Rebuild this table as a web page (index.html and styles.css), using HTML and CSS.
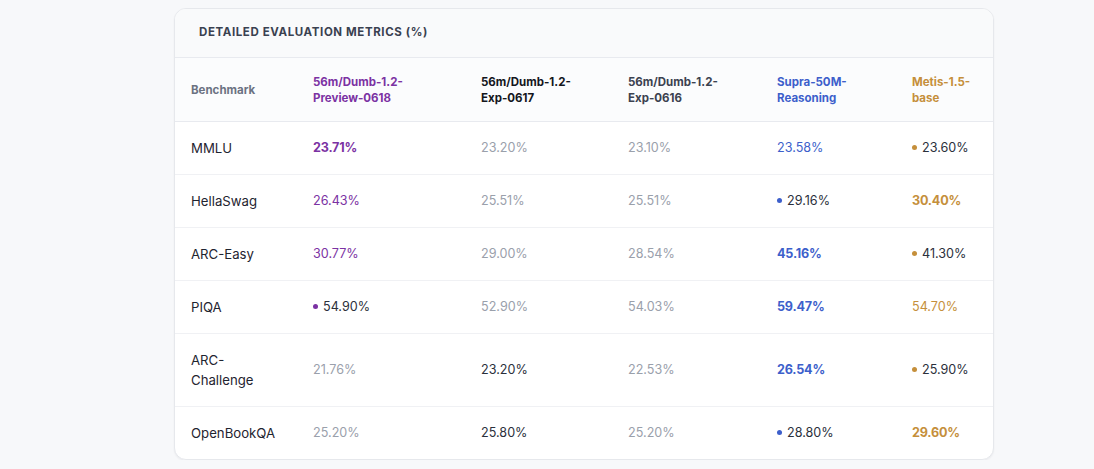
FILE: index.html
```html
<!DOCTYPE html>
<html lang="en">
<head>
<meta charset="utf-8">
<title>Detailed Evaluation Metrics</title>
<link rel="stylesheet" href="styles.css">
</head>
<body>
<div class="page">
  <section class="card">
    <header class="card-head">
      <h2 class="card-title">Detailed Evaluation Metrics (%)</h2>
    </header>
    <table class="metrics">
      <colgroup>
        <col class="c-bench">
        <col class="c-m1">
        <col class="c-m2">
        <col class="c-m3">
        <col class="c-m4">
        <col class="c-m5">
      </colgroup>
      <thead>
        <tr>
          <th class="th-bench">Benchmark</th>
          <th class="purple">56m/Dumb-1.2-<br>Preview-0618</th>
          <th class="black">56m/Dumb-1.2-<br>Exp-0617</th>
          <th class="dark">56m/Dumb-1.2-<br>Exp-0616</th>
          <th class="blue">Supra-50M-<br>Reasoning</th>
          <th class="gold">Metis-1.5-<br>base</th>
        </tr>
      </thead>
      <tbody>
        <tr>
          <td class="bench">MMLU</td>
          <td class="purple strong">23.71%</td>
          <td class="muted">23.20%</td>
          <td class="muted">23.10%</td>
          <td class="blue">23.58%</td>
          <td class="plain"><span class="dot dot-gold"></span>23.60%</td>
        </tr>
        <tr>
          <td class="bench">HellaSwag</td>
          <td class="purple">26.43%</td>
          <td class="muted">25.51%</td>
          <td class="muted">25.51%</td>
          <td class="plain"><span class="dot dot-blue"></span>29.16%</td>
          <td class="gold strong">30.40%</td>
        </tr>
        <tr>
          <td class="bench">ARC-Easy</td>
          <td class="purple">30.77%</td>
          <td class="muted">29.00%</td>
          <td class="muted">28.54%</td>
          <td class="blue strong">45.16%</td>
          <td class="plain"><span class="dot dot-gold"></span>41.30%</td>
        </tr>
        <tr>
          <td class="bench">PIQA</td>
          <td class="plain"><span class="dot dot-purple"></span>54.90%</td>
          <td class="muted">52.90%</td>
          <td class="muted">54.03%</td>
          <td class="blue strong">59.47%</td>
          <td class="gold">54.70%</td>
        </tr>
        <tr>
          <td class="bench">ARC-<br>Challenge</td>
          <td class="muted">21.76%</td>
          <td class="plain">23.20%</td>
          <td class="muted">22.53%</td>
          <td class="blue strong">26.54%</td>
          <td class="plain"><span class="dot dot-gold"></span>25.90%</td>
        </tr>
        <tr class="last">
          <td class="bench">OpenBookQA</td>
          <td class="muted">25.20%</td>
          <td class="plain">25.80%</td>
          <td class="muted">25.20%</td>
          <td class="plain"><span class="dot dot-blue"></span>28.80%</td>
          <td class="gold strong">29.60%</td>
        </tr>
      </tbody>
    </table>
  </section>
</div>
</body>
</html>
```

FILE: styles.css
```css
* { box-sizing: border-box; }

html, body {
  margin: 0;
  padding: 0;
  background: #f7f8fa;
  font-family: Inter, "Noto Sans", "Liberation Sans", sans-serif;
  color: #1f2430;
}

.page {
  padding: 8px 0 0 174px;
}

.card {
  width: 820px;
  background: #ffffff;
  border: 1px solid #e6e8ec;
  border-radius: 12px;
  overflow: hidden;
  box-shadow: 0 1px 2px rgba(16, 24, 40, 0.05);
}

.card-head {
  background: #f9fafb;
  border-bottom: 1px solid #e8eaef;
  padding: 15px 24px 16px;
}

.card-title {
  margin: 0;
  font-size: 11.5px;
  line-height: 17px;
  font-weight: 700;
  letter-spacing: 0.6px;
  text-transform: uppercase;
  color: #3a4150;
}

.metrics {
  width: 100%;
  border-collapse: collapse;
  table-layout: fixed;
}

.c-bench { width: 122px; }
.c-m1 { width: 168px; }
.c-m2 { width: 147px; }
.c-m3 { width: 149px; }
.c-m4 { width: 135px; }
.c-m5 { width: 97px; }

.metrics th {
  text-align: left;
  font-size: 11.5px;
  line-height: 16px;
  font-weight: 700;
  padding: 16px 8px 15px 16px;
  background: #fbfcfd;
  border-bottom: 1px solid #e8eaef;
  vertical-align: middle;
}

.metrics th.th-bench {
  color: #6b7282;
  font-size: 11.5px;
}

.metrics td {
  padding: 16px 8px 16px 16px;
  font-size: 12.6px;
  line-height: 20px;
  border-bottom: 1px solid #f0f1f4;
  vertical-align: middle;
  white-space: nowrap;
}

.metrics tr.last td { border-bottom: 0; }

.metrics td.bench {
  font-size: 13.2px;
  color: #1f2430;
}

.purple { color: #7b32a3; }
.blue { color: #3d5fcb; }
.gold { color: #c58f3b; }
.black { color: #14161c; }
.dark { color: #3c4250; }
.muted { color: #9aa0ab; }
.plain { color: #2b303b; }

.metrics td.strong { font-weight: 700; letter-spacing: -0.2px; }

.dot {
  display: inline-block;
  width: 5px;
  height: 5px;
  border-radius: 50%;
  margin-right: 5px;
  vertical-align: middle;
  position: relative;
  top: -1px;
}

.dot-purple { background: #7b32a3; }
.dot-blue { background: #3d5fcb; }
.dot-gold { background: #c58f3b; }
```
